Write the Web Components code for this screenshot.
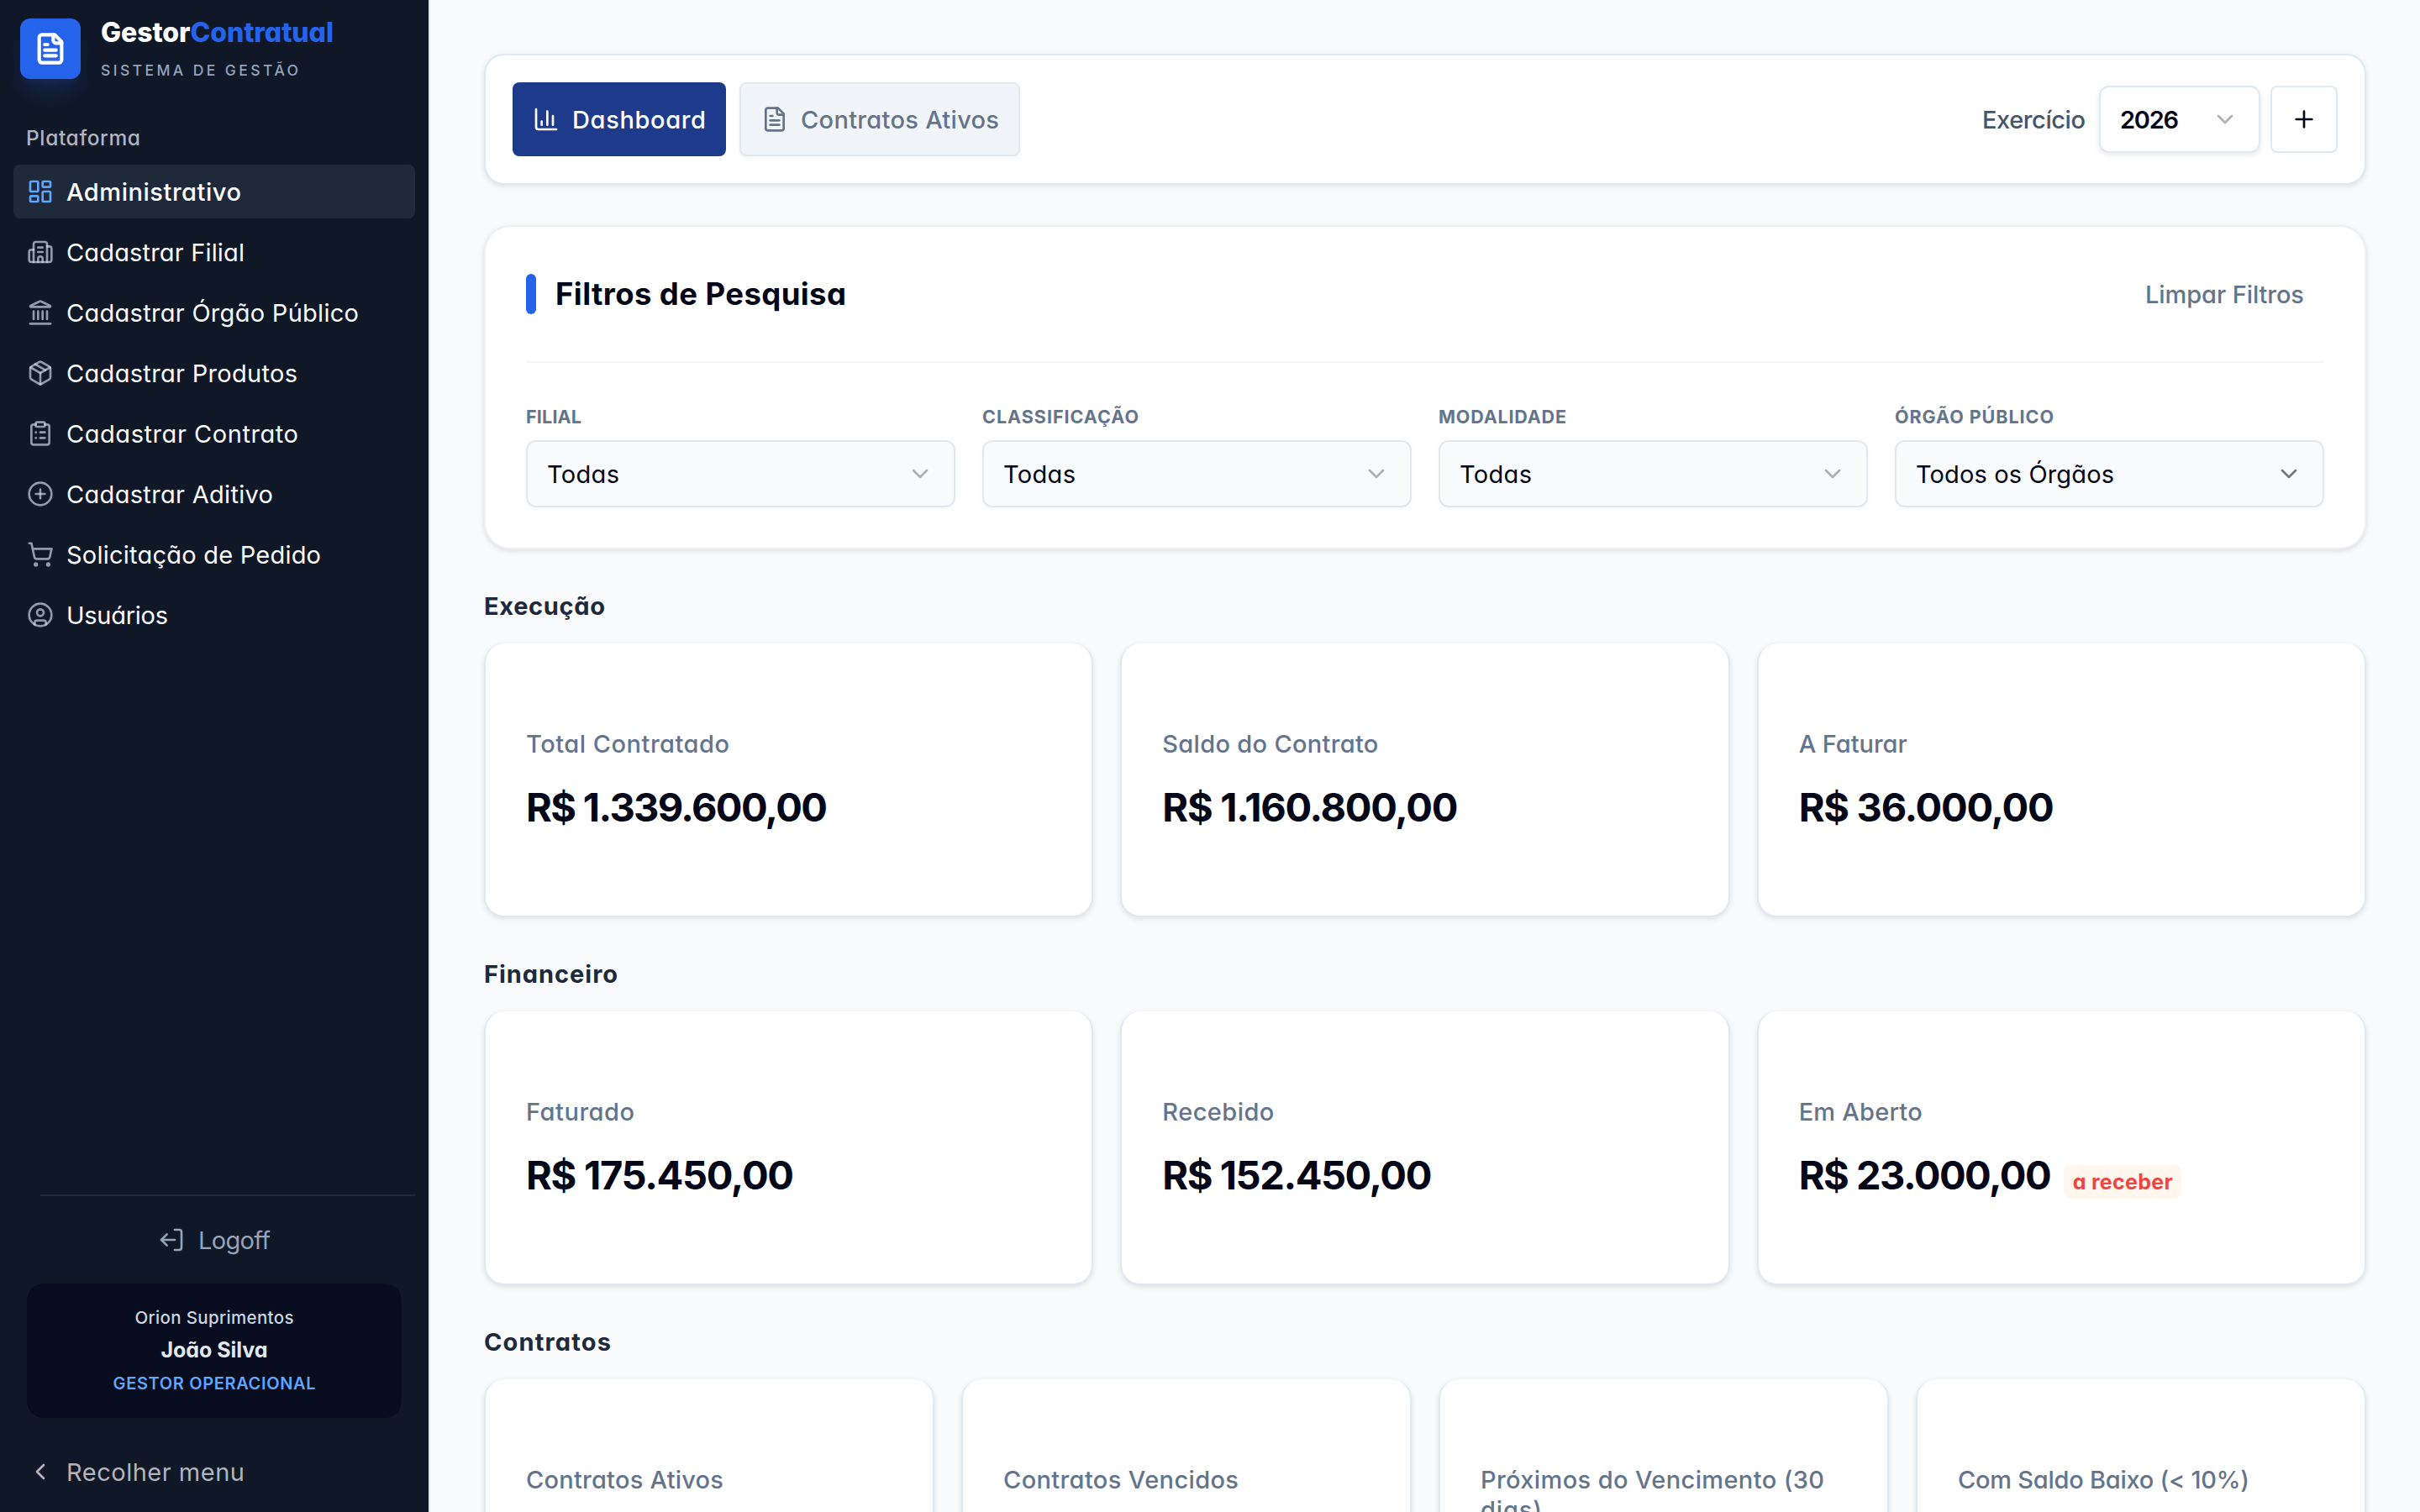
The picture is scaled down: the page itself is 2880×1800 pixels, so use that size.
<!DOCTYPE html>
<html lang="pt-BR">
<head>
<meta charset="UTF-8">
<title>GestorContratual</title>
<style>
    html, body {
        margin: 0;
        height: 100%;
        overflow: hidden;
    }
    body {
        background: #f8fafc;
        color: #020617;
        font-family: Inter, 'Open Sans', sans-serif;
        font-feature-settings: 'cv11';
        font-size: 29px;
    }
</style>
</head>
<body>
<app-shell>
    <app-sidebar slot="sidebar"></app-sidebar>
    <top-bar></top-bar>
    <filter-panel></filter-panel>
    <card-section heading="Execução" w="144" cols="3">
        <stat-card label="Total Contratado" lw="242" value="R$ 1.339.600,00" vw="359"></stat-card>
        <stat-card label="Saldo do Contrato" lw="257" value="R$ 1.160.800,00" vw="352"></stat-card>
        <stat-card label="A Faturar" lw="129" value="R$ 36.000,00" vw="304"></stat-card>
    </card-section>
    <card-section heading="Financeiro" w="159" cols="3">
        <stat-card label="Faturado" lw="129" value="R$ 175.450,00" vw="319"></stat-card>
        <stat-card label="Recebido" lw="133" value="R$ 152.450,00" vw="321"></stat-card>
        <stat-card label="Em Aberto" lw="147" value="R$ 23.000,00" vw="301">
            <status-badge w="119">a receber</status-badge>
        </stat-card>
    </card-section>
    <card-section heading="Contratos" w="151" cols="4">
        <stat-card label="Contratos Ativos" lw="235"></stat-card>
        <stat-card label="Contratos Vencidos" lw="280"></stat-card>
        <stat-card label="Próximos do Vencimento (30|dias)" lw="409|73"></stat-card>
        <stat-card label="Com Saldo Baixo (&lt; 10%)" lw="347"></stat-card>
    </card-section>
</app-shell>

<script>
// Stroke icons on a 24x24 grid
const ICONS = {
    file: ['M15 2H6a2 2 0 0 0-2 2v16a2 2 0 0 0 2 2h12a2 2 0 0 0 2-2V7Z', 'M14 2v4a2 2 0 0 0 2 2h4', 'M10 9H8', 'M16 13H8', 'M16 17H8'],
    dashboard: ['M4 3h5a1 1 0 0 1 1 1v7a1 1 0 0 1-1 1H4a1 1 0 0 1-1-1V4a1 1 0 0 1 1-1Z', 'M15 3h5a1 1 0 0 1 1 1v3a1 1 0 0 1-1 1h-5a1 1 0 0 1-1-1V4a1 1 0 0 1 1-1Z', 'M15 12h5a1 1 0 0 1 1 1v7a1 1 0 0 1-1 1h-5a1 1 0 0 1-1-1v-7a1 1 0 0 1 1-1Z', 'M4 16h5a1 1 0 0 1 1 1v3a1 1 0 0 1-1 1H4a1 1 0 0 1-1-1v-3a1 1 0 0 1 1-1Z'],
    building: ['M10 12h4', 'M10 8h4', 'M14 21v-3a2 2 0 0 0-4 0v3', 'M6 10H4a2 2 0 0 0-2 2v7a2 2 0 0 0 2 2h16a2 2 0 0 0 2-2V9a2 2 0 0 0-2-2h-2', 'M6 21V5a2 2 0 0 1 2-2h8a2 2 0 0 1 2 2v16'],
    landmark: ['M10 18v-7', 'M11.12 2.198a2 2 0 0 1 1.76.006l7.866 3.847c.476.233.31.949-.22.949H3.474c-.53 0-.695-.716-.22-.949z', 'M14 18v-7', 'M18 18v-7', 'M3 22h18', 'M6 18v-7'],
    box: ['M11 21.73a2 2 0 0 0 2 0l7-4A2 2 0 0 0 21 16V8a2 2 0 0 0-1-1.73l-7-4a2 2 0 0 0-2 0l-7 4A2 2 0 0 0 3 8v8a2 2 0 0 0 1 1.73z', 'M12 22V12', 'M3.29 7 12 12 20.71 7', 'm7.5 4.27 9 5.15'],
    clipboard: ['M9 2h6a1 1 0 0 1 1 1v2a1 1 0 0 1-1 1H9a1 1 0 0 1-1-1V3a1 1 0 0 1 1-1Z', 'M16 4h2a2 2 0 0 1 2 2v14a2 2 0 0 1-2 2H6a2 2 0 0 1-2-2V6a2 2 0 0 1 2-2h2', 'M12 11h4', 'M12 16h4', 'M8 11h.01', 'M8 16h.01'],
    plusCircle: ['M22 12a10 10 0 1 1-20 0 10 10 0 0 1 20 0Z', 'M8 12h8', 'M12 8v8'],
    cart: ['M9 21a1 1 0 1 1-2 0 1 1 0 0 1 2 0Z', 'M20 21a1 1 0 1 1-2 0 1 1 0 0 1 2 0Z', 'M2.05 2.05h2l2.66 12.42a2 2 0 0 0 2 1.58h9.78a2 2 0 0 0 1.95-1.57l1.65-7.43H5.12'],
    user: ['M22 12a10 10 0 1 1-20 0 10 10 0 0 1 20 0Z', 'M15 10a3 3 0 1 1-6 0 3 3 0 0 1 6 0Z', 'M7 20.662V19a2 2 0 0 1 2-2h6a2 2 0 0 1 2 2v1.662'],
    logoff: ['m8 17-5-5 5-5', 'M3 12h12', 'M15 21h4a2 2 0 0 0 2-2V5a2 2 0 0 0-2-2h-4'],
    left: ['m15 18-6-6 6-6'],
    down: ['m6 9 6 6 6-6'],
    plus: ['M5 12h14', 'M12 5v14'],
    chart: ['M3 3v16a2 2 0 0 0 2 2h16', 'M18 17V9', 'M13 17V5', 'M8 17v-3']
};

class UiIcon extends HTMLElement {
    connectedCallback() {
        if (!this.shadowRoot) this.attachShadow({ mode: 'open' });
        const size = this.getAttribute('size') || 32;
        const stroke = this.getAttribute('stroke') || 2;
        const paths = ICONS[this.getAttribute('name')].map(d => `<path d="${d}"/>`).join('');
        this.shadowRoot.innerHTML = `
            <style>
                :host { display: block; flex: none; width: ${size}px; height: ${size}px; }
                svg { display: block; }
            </style>
            <svg width="${size}" height="${size}" viewBox="0 0 24 24" fill="none" stroke="currentColor"
                stroke-width="${stroke}" stroke-linecap="round" stroke-linejoin="round">${paths}</svg>
        `;
    }
}

// Page frame: sidebar column + content column
class AppShell extends HTMLElement {
    constructor() {
        super();
        this.attachShadow({ mode: 'open' }).innerHTML = `
            <style>
                :host { display: flex; height: 1800px; overflow: hidden; }
                main {
                    flex: 1;
                    min-width: 0;
                    box-sizing: border-box;
                    padding: 64px;
                    display: flex;
                    flex-direction: column;
                    gap: 48px;
                }
            </style>
            <slot name="sidebar"></slot>
            <main><slot></slot></main>
        `;
    }
}

class NavItem extends HTMLElement {
    connectedCallback() {
        if (!this.shadowRoot) this.attachShadow({ mode: 'open' });
        this.shadowRoot.innerHTML = `
            <style>
                :host {
                    display: flex;
                    align-items: center;
                    gap: 15px;
                    height: 64px;
                    padding: 0 16px;
                    border-radius: 8px;
                    color: #f8fafc;
                }
                ui-icon { color: rgba(214, 224, 236, 0.65); }
                :host([active]) { background: #1e2939; color: #fff; font-weight: 500; }
                :host([active]) ui-icon { color: #60a5fa; }
                :host([muted]), :host([muted]) ui-icon { color: #b2b4ba; }
            </style>
            <ui-icon name="${this.getAttribute('icon')}"></ui-icon>
            <fit-text w="${this.getAttribute('w')}"><slot></slot></fit-text>
        `;
    }
}

class AppSidebar extends HTMLElement {
    constructor() {
        super();
        this.attachShadow({ mode: 'open' }).innerHTML = `
            <style>
                :host {
                    display: flex;
                    flex-direction: column;
                    flex: none;
                    box-sizing: border-box;
                    width: 512px;
                    height: 1800px;
                    background: #101828;
                    border-right: 2px solid #e2e8f0;
                }
                header { display: flex; gap: 24px; padding: 19px 24px 0; }
                .logo {
                    display: flex;
                    align-items: center;
                    justify-content: center;
                    width: 72px;
                    height: 72px;
                    margin-top: 3px;
                    border-radius: 12px;
                    background: #2563eb;
                    color: #fff;
                    box-shadow: 0 20px 30px -6px rgba(37, 99, 235, 0.2), 0 8px 12px -8px rgba(37, 99, 235, 0.2);
                }
                .name { height: 40px; line-height: 40px; font-size: 32px; font-weight: 800; color: #fff; }
                .name b { font-weight: 800; color: #2563eb; }
                .tag { margin-top: 11px; height: 28px; line-height: 28px; font-size: 17.5px; font-weight: 500; color: #94a3b8; }
                .group { margin: 50px 0 16px 31px; height: 32px; line-height: 32px; font-size: 24.5px; font-weight: 500; color: #b2b4ba; }
                nav { display: flex; flex-direction: column; gap: 8px; padding: 0 16px; }
                footer { margin-top: auto; padding: 0 16px 16px; }
                hr { margin: 0 0 20px 32px; border: 0; height: 2px; background: #1e2939; }
                .logoff {
                    display: flex;
                    align-items: center;
                    justify-content: center;
                    gap: 16px;
                    height: 64px;
                    color: #94a3b8;
                }
                .user {
                    margin: 20px 16px 32px;
                    box-sizing: border-box;
                    height: 160px;
                    padding-top: 23px;
                    border-radius: 20px;
                    background: #070c1e;
                    text-align: center;
                    line-height: 40px;
                }
                .user div { height: 40px; }
                .user .org { height: 36px; line-height: 36px; font-size: 20.5px; font-weight: 500; color: #cbd5e1; }
                .user .who { font-size: 25px; font-weight: 700; color: #e2e8f0; }
                .user .role { font-size: 20px; font-weight: 600; color: #60a5fa; }
            </style>
            <header>
                <div class="logo"><ui-icon name="file" size="40" stroke="2.5"></ui-icon></div>
                <div>
                    <div class="name"><fit-text w="277">Gestor<b>Contratual</b></fit-text></div>
                    <div class="tag"><fit-text w="235">SISTEMA DE GESTÃO</fit-text></div>
                </div>
            </header>
            <div class="group"><fit-text w="136">Plataforma</fit-text></div>
            <nav>
                <nav-item active icon="dashboard" w="208">Administrativo</nav-item>
                <nav-item icon="building" w="212">Cadastrar Filial</nav-item>
                <nav-item icon="landmark" w="348">Cadastrar Órgão Público</nav-item>
                <nav-item icon="box" w="275">Cadastrar Produtos</nav-item>
                <nav-item icon="clipboard" w="276">Cadastrar Contrato</nav-item>
                <nav-item icon="plusCircle" w="246">Cadastrar Aditivo</nav-item>
                <nav-item icon="cart" w="303">Solicitação de Pedido</nav-item>
                <nav-item icon="user" w="121">Usuários</nav-item>
            </nav>
            <footer>
                <hr>
                <div class="logoff"><ui-icon name="logoff"></ui-icon><fit-text w="86">Logoff</fit-text></div>
                <div class="user">
                    <div class="org"><fit-text w="189">Orion Suprimentos</fit-text></div>
                    <div class="who"><fit-text w="127">João Silva</fit-text></div>
                    <div class="role"><fit-text w="241">GESTOR OPERACIONAL</fit-text></div>
                </div>
                <nav-item muted icon="left" w="212">Recolher menu</nav-item>
            </footer>
        `;
    }
}

class SelectBox extends HTMLElement {
    connectedCallback() {
        if (!this.shadowRoot) this.attachShadow({ mode: 'open' });
        this.shadowRoot.innerHTML = `
            <style>
                :host {
                    display: flex;
                    align-items: center;
                    justify-content: space-between;
                    box-sizing: border-box;
                    height: 80px;
                    padding: 0 24px 0 23px;
                    border: 2px solid #e2e8f0;
                    border-radius: 12px;
                    background: #f8fafc;
                    box-shadow: 0 2px 4px rgba(0, 0, 0, 0.04);
                }
                ui-icon { color: #aeb0b3; }
                :host([strong]) ui-icon { color: #77747f; }
            </style>
            <fit-text w="${this.getAttribute('w')}"><slot></slot></fit-text>
            <ui-icon name="down"></ui-icon>
        `;
    }
}

class TopBar extends HTMLElement {
    constructor() {
        super();
        this.attachShadow({ mode: 'open' }).innerHTML = `
            <style>
                :host {
                    display: flex;
                    flex: none;
                    align-items: center;
                    justify-content: space-between;
                    box-sizing: border-box;
                    height: 156px;
                    padding: 0 32px;
                    border: 2px solid #e2e8f0;
                    border-radius: 24px;
                    background: #fff;
                    box-shadow: 0 2px 6px rgba(0, 0, 0, 0.1);
                    font-weight: 500;
                }
                .tabs { display: flex; gap: 16px; }
                .tab {
                    display: flex;
                    align-items: center;
                    gap: 15px;
                    box-sizing: border-box;
                    width: 254px;
                    height: 88px;
                    padding: 0 24px;
                    border-radius: 8px;
                    background: #1e3a8a;
                    color: #fff;
                }
                .tab.idle {
                    width: 334px;
                    background: #f1f5f9;
                    border: 2px solid #e2e8f0;
                    color: #64748b;
                    box-shadow: 0 2px 4px rgba(0, 0, 0, 0.05);
                }
                .year { display: flex; align-items: center; color: #475569; }
                select-box {
                    width: 192px;
                    margin: 0 12px 0 16px;
                    background: #fff;
                    color: #020617;
                    font-weight: 600;
                    box-shadow: 0 2px 6px rgba(0, 0, 0, 0.1);
                }
                .add {
                    display: flex;
                    align-items: center;
                    justify-content: center;
                    box-sizing: border-box;
                    width: 80px;
                    height: 80px;
                    border: 2px solid #e2e8f0;
                    border-radius: 8px;
                    color: #020617;
                }
            </style>
            <div class="tabs">
                <div class="tab"><ui-icon name="chart"></ui-icon><fit-text w="159">Dashboard</fit-text></div>
                <div class="tab idle"><ui-icon name="file"></ui-icon><fit-text w="236">Contratos Ativos</fit-text></div>
            </div>
            <div class="year">
                <fit-text w="123">Exercício</fit-text>
                <select-box w="70">2026</select-box>
                <div class="add"><ui-icon name="plus"></ui-icon></div>
            </div>
        `;
    }
}

class FilterPanel extends HTMLElement {
    constructor() {
        super();
        this.attachShadow({ mode: 'open' }).innerHTML = `
            <style>
                :host {
                    display: block;
                    flex: none;
                    box-sizing: border-box;
                    height: 386px;
                    padding: 48px;
                    border: 2px solid #eff0f3;
                    border-radius: 32px;
                    background: #fff;
                    box-shadow: 0 2px 6px rgba(0, 0, 0, 0.12);
                }
                .head {
                    display: flex;
                    align-items: center;
                    height: 64px;
                    padding-bottom: 48px;
                    border-bottom: 2px solid #f1f5f9;
                }
                .bar { width: 12px; height: 48px; border-radius: 6px; background: #2563eb; }
                .title { flex: 1; margin-left: 23px; font-size: 36.5px; font-weight: 700; }
                .clear { margin-right: 24px; color: #64748b; font-weight: 500; }
                .grid { display: grid; grid-template-columns: repeat(4, 1fr); gap: 32px; margin-top: 48px; }
                .label { height: 32px; line-height: 32px; margin-bottom: 12px; font-size: 21.5px; font-weight: 700; color: #64748b; }
            </style>
            <div class="head">
                <div class="bar"></div>
                <div class="title"><fit-text w="346">Filtros de Pesquisa</fit-text></div>
                <div class="clear"><fit-text w="189">Limpar Filtros</fit-text></div>
            </div>
            <div class="grid">
                <div><div class="label"><fit-text w="66">FILIAL</fit-text></div><select-box w="86">Todas</select-box></div>
                <div><div class="label"><fit-text w="186">CLASSIFICAÇÃO</fit-text></div><select-box w="86">Todas</select-box></div>
                <div><div class="label"><fit-text w="152">MODALIDADE</fit-text></div><select-box w="86">Todas</select-box></div>
                <div><div class="label"><fit-text w="189">ÓRGÃO PÚBLICO</fit-text></div><select-box strong w="236">Todos os Órgãos</select-box></div>
            </div>
        `;
    }
}

class CardSection extends HTMLElement {
    connectedCallback() {
        if (!this.shadowRoot) this.attachShadow({ mode: 'open' });
        this.shadowRoot.innerHTML = `
            <style>
                :host { display: block; flex: none; }
                h2 { margin: 0 0 24px; height: 40px; line-height: 40px; font-size: 29px; font-weight: 700; color: #1e293b; }
                .grid { display: grid; grid-template-columns: repeat(${this.getAttribute('cols')}, 1fr); gap: 32px; }
            </style>
            <h2><fit-text w="${this.getAttribute('w')}">${this.getAttribute('heading')}</fit-text></h2>
            <div class="grid"><slot></slot></div>
        `;
    }
}

class StatCard extends HTMLElement {
    connectedCallback() {
        if (!this.shadowRoot) this.attachShadow({ mode: 'open' });
        const widths = this.getAttribute('lw').split('|');
        // each "|" in the label starts a new line
        const lines = this.getAttribute('label').split('|')
            .map((t, i) => `<div class="label"><fit-text w="${widths[i]}">${t.replace('<', '&lt;')}</fit-text></div>`).join('');
        const value = this.getAttribute('value');
        this.shadowRoot.innerHTML = `
            <style>
                :host {
                    display: block;
                    box-sizing: border-box;
                    height: 326px;
                    padding: 102px 48px 0;
                    border: 2px solid #e2e8f0;
                    border-top: 0;
                    border-radius: 24px;
                    background: #fff;
                    box-shadow: 0 2px 6px rgba(0, 0, 0, 0.1);
                }
                .label { height: 36px; line-height: 36px; color: #64748b; font-weight: 500; }
                .row { display: flex; align-items: baseline; gap: 14px; margin-top: 25px; }
                .value { line-height: 64px; font-size: 47px; font-weight: 700; }
            </style>
            ${lines}
            <div class="row">
                ${value ? `<div class="value"><fit-text w="${this.getAttribute('vw')}">${value}</fit-text></div>` : ''}
                <slot></slot>
            </div>
        `;
    }
}

class StatusBadge extends HTMLElement {
    connectedCallback() {
        if (!this.shadowRoot) this.attachShadow({ mode: 'open' });
        this.shadowRoot.innerHTML = `
            <style>
                :host {
                    display: block;
                    padding: 0 10px 0 11px;
                    line-height: 40px;
                    border-radius: 8px;
                    background: #fff7ed;
                    color: #ef4444;
                    font-size: 25px;
                    font-weight: 700;
                }
            </style>
            <fit-text w="${this.getAttribute('w')}"><slot></slot></fit-text>
        `;
    }
}

// Tracks its text out (or in) so that the line is w pixels wide
class FitText extends HTMLElement {
    constructor() {
        super();
        this.attachShadow({ mode: 'open' }).innerHTML = `
            <style>:host { display: inline-block; white-space: nowrap; }</style>
            <slot></slot>
        `;
    }
    connectedCallback() {
        const slot = this.querySelector('slot');
        const text = slot ? slot.assignedNodes().map(n => n.textContent).join('') : this.textContent;
        const gaps = text.trim().length - 1;
        if (gaps < 1) return;
        const spacing = (Number(this.getAttribute('w')) - this.getBoundingClientRect().width) / gaps;
        this.style.letterSpacing = spacing.toFixed(3) + 'px';
        this.style.marginRight = (-spacing).toFixed(3) + 'px';
    }
}

customElements.define('app-shell', AppShell);
customElements.define('ui-icon', UiIcon);
customElements.define('app-sidebar', AppSidebar);
customElements.define('nav-item', NavItem);
customElements.define('top-bar', TopBar);
customElements.define('select-box', SelectBox);
customElements.define('filter-panel', FilterPanel);
customElements.define('card-section', CardSection);
customElements.define('stat-card', StatCard);
customElements.define('status-badge', StatusBadge);
// last, because it measures text that the others have styled
customElements.define('fit-text', FitText);
</script>
</body>
</html>
